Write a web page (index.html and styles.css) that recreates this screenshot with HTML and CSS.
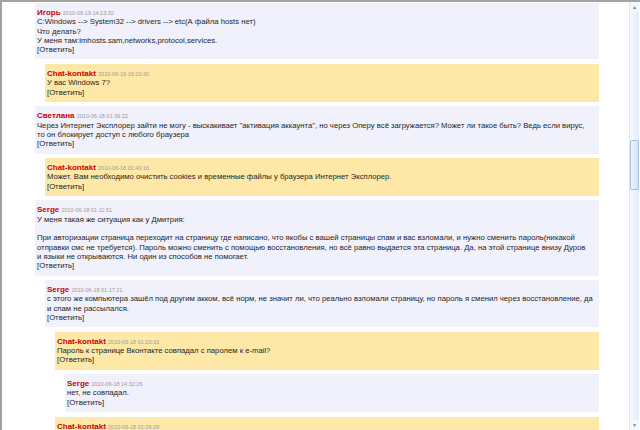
FILE: index.html
```html
<!DOCTYPE html>
<html lang="ru">
<head>
    <meta charset="UTF-8">
    <meta name="viewport" content="width=device-width, initial-scale=1.0">
    <title>Комментарии</title>
    <link rel="stylesheet" href="styles.css">
</head>
<body>

    <div class="window">
        <div class="content">

            <div class="comment guest">
                <div class="head"><span class="name">Игорь</span> <span class="date">2010-06-19 14:13:32</span></div>
                C:Windows --&gt; System32 --&gt; drivers --&gt; etc(А файла hosts нет)<br>
                Что делать?<br>
                У меня там:lmhosts.sam,networks,protocol,services.<br>
                <a class="reply">[Ответить]</a>
            </div>

            <div class="comment admin lvl1">
                <div class="head"><span class="name">Chat-kontakt</span> <span class="date">2010-06-19 16:20:30</span></div>
                У вас Windows 7?<br>
                <a class="reply">[Ответить]</a>
            </div>

            <div class="comment guest">
                <div class="head"><span class="name">Светлана</span> <span class="date">2010-06-18 01:39:22</span></div>
                Через Интернет Эксплорер зайти не могу - выскакивает "активация аккаунта", но через Оперу всё загружается? Может ли такое быть? Ведь если вирус,<br>
                то он блокирует доступ с любого браузера<br>
                <a class="reply">[Ответить]</a>
            </div>

            <div class="comment admin lvl1">
                <div class="head"><span class="name">Chat-kontakt</span> <span class="date">2010-06-18 01:40:16</span></div>
                Может. Вам необходимо очистить cookies и временные файлы у браузера Интернет Эксплорер.<br>
                <a class="reply">[Ответить]</a>
            </div>

            <div class="comment guest">
                <div class="head"><span class="name">Serge</span> <span class="date">2010-06-18 01:11:51</span></div>
                У меня такая же ситуация как у Дмитрия:<br>
                <br>
                При авторизации страница переходит на страницу где написано, что якобы с вашей страницы спам и вас взломали, и нужно сменить пароль(никакой<br>
                отправки смс не требуется). Пароль можно сменить с помощью восстановления, но всё равно выдается эта страница. Да, на этой странице внизу Дуров<br>
                и языки не открываются. Ни один из способов не помогает.<br>
                <a class="reply">[Ответить]</a>
            </div>

            <div class="comment guest lvl1">
                <div class="head"><span class="name">Serge</span> <span class="date">2010-06-18 01:17:21</span></div>
                с этого же компьютера зашёл под другим акком, всё норм, не значит ли, что реально взломали страницу, но пароль я сменил через восстановление, да<br>
                и спам не рассылался.<br>
                <a class="reply">[Ответить]</a>
            </div>

            <div class="comment admin lvl2">
                <div class="head"><span class="name">Chat-kontakt</span> <span class="date">2010-06-18 01:20:33</span></div>
                Пароль к странице Вконтакте совпадал с паролем к e-mail?<br>
                <a class="reply">[Ответить]</a>
            </div>

            <div class="comment guest lvl3">
                <div class="head"><span class="name">Serge</span> <span class="date">2010-06-18 14:32:26</span></div>
                нет, не совпадал.<br>
                <a class="reply">[Ответить]</a>
            </div>

            <div class="comment admin lvl2">
                <div class="head"><span class="name">Chat-kontakt</span> <span class="date">2010-06-18 01:26:29</span></div>
                Тогда проверьте компьютер антивирусом.<br>
                <a class="reply">[Ответить]</a>
            </div>

        </div>

        <div class="scrollbar">
            <div class="arrow up">&#9650;</div>
            <div class="track"><div class="thumb"></div></div>
            <div class="arrow down">&#9660;</div>
        </div>
    </div>

</body>
</html>
```

FILE: styles.css
```css
html, body { margin: 0; padding: 0; background: #fff; }
body { font-family: "Liberation Sans", Arial, sans-serif; font-size: 7.7px; line-height: 9.3px; color: #1e1e1e; }
.window { display: flex; height: 428px; border-top: 2px solid #a3a3a3; border-left: 2px solid #a3a3a3; overflow: hidden; }
.content { flex: 1; padding: 1px 30px 0 33px; overflow: hidden; }

.comment { padding: 5px 0 5px 2px; margin-bottom: 4.5px; white-space: nowrap; }
.guest { background: #f1f1fb; }
.admin { background: #fee8a7; }
.lvl1 { margin-left: 10px; }
.lvl2 { margin-left: 20px; }
.lvl3 { margin-left: 30px; }

.head { height: 9.3px; }
.name { font-size: 8px; line-height: 9px; font-weight: bold; color: #c00; }
.date { font-size: 5.5px; line-height: 6px; color: #9a9a9a; }
.reply { color: #1e1e1e; cursor: pointer; }

.scrollbar { width: 9px; margin-right: 1px; display: flex; flex-direction: column; background: #f4f8fe; border-left: 1px solid #dfe7f3; }
.arrow { height: 10px; font-size: 5px; line-height: 10px; text-align: center; color: #6b7f99; }
.track { flex: 1; padding-top: 128px; background: linear-gradient(to right, #f7faff, #e4edf9); }
.thumb { height: 48px; border: 1px solid #a9bfdc; border-radius: 2px; background: linear-gradient(to right, #eef4fd, #d4e2f5); }
```
